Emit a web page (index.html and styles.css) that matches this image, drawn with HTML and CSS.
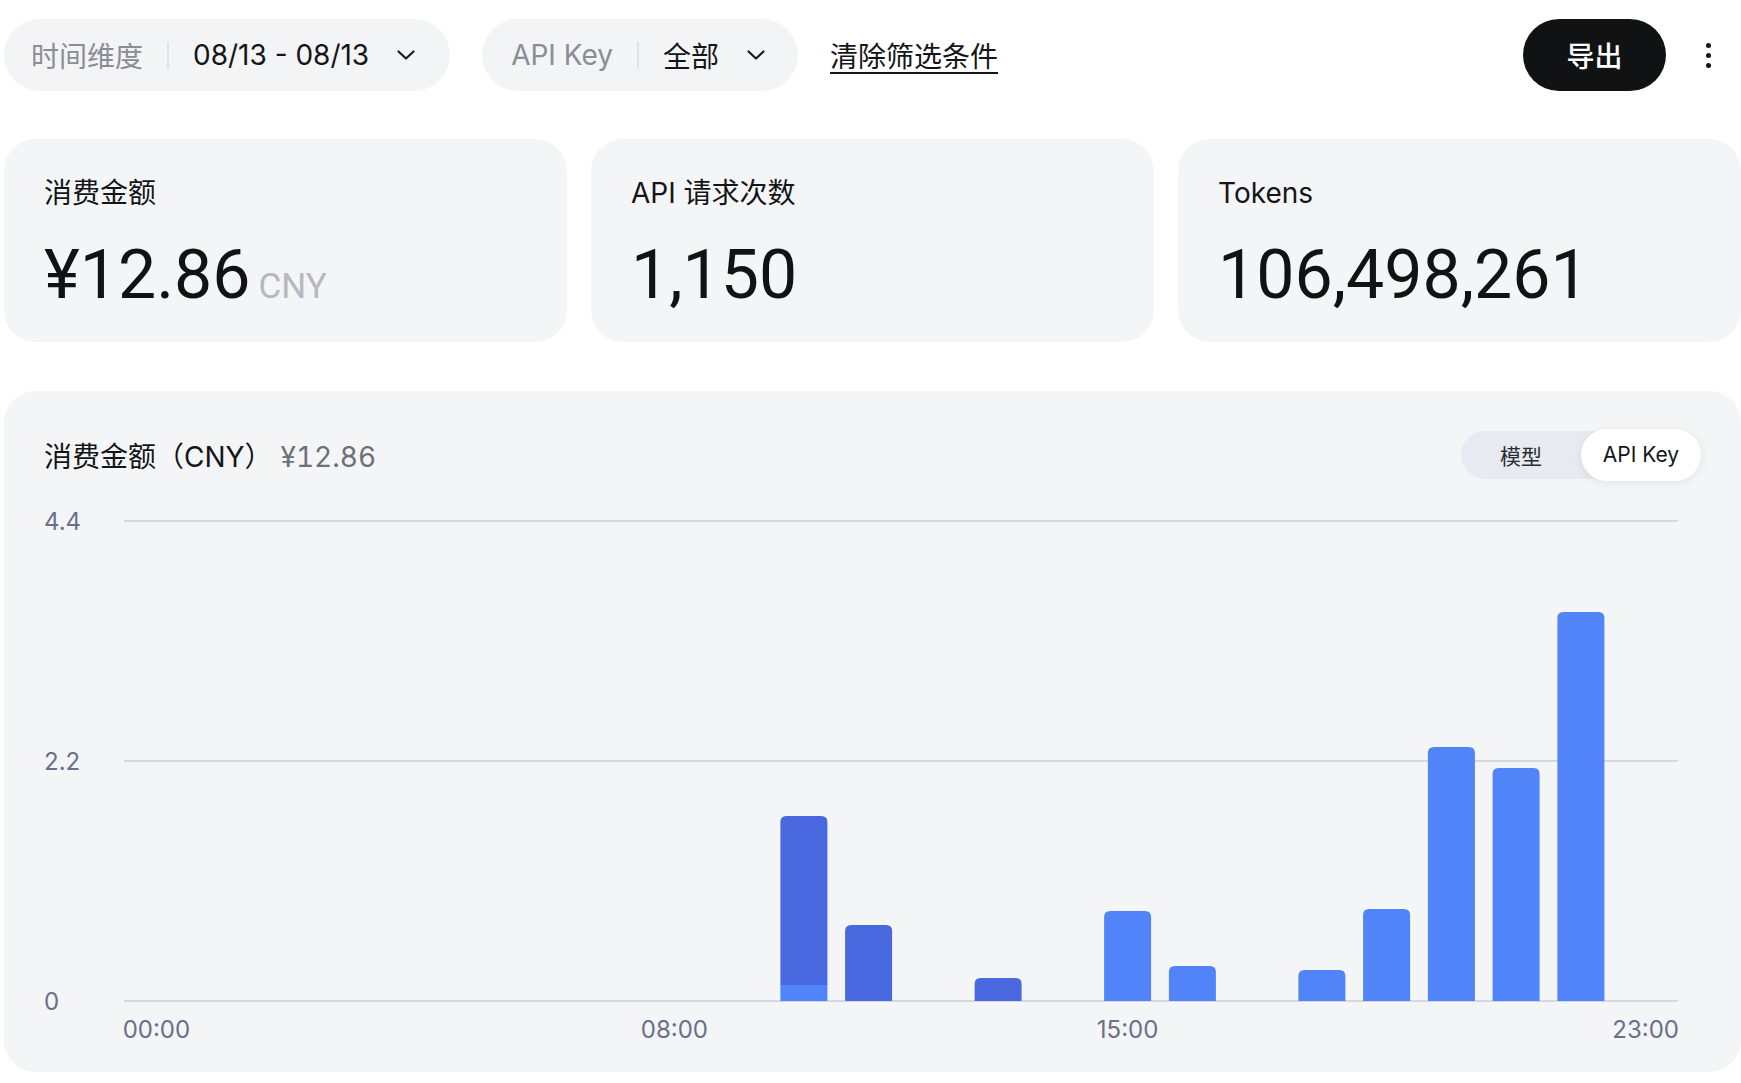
FILE: index.html
```html
<!DOCTYPE html>
<html lang="zh-CN">
<head>
<meta charset="utf-8">
<title>用量</title>
<link rel="stylesheet" href="styles.css">
</head>
<body>
<div class="page">
  <div class="toolbar">
    <div class="pill pill-time">
      <span class="pill-label">时间维度</span>
      <span class="pill-sep"></span>
      <span class="pill-value">08/13 - 08/13</span>
      <svg class="chev" viewBox="0 0 18 10" width="18" height="10"><path d="M1.5 1.5 L9 8.5 L16.5 1.5" fill="none" stroke="#1b1c1f" stroke-width="2.2" stroke-linecap="round" stroke-linejoin="round"/></svg>
    </div>
    <div class="pill pill-key">
      <span class="pill-label">API Key</span>
      <span class="pill-sep"></span>
      <span class="pill-value">全部</span>
      <svg class="chev" viewBox="0 0 18 10" width="18" height="10"><path d="M1.5 1.5 L9 8.5 L16.5 1.5" fill="none" stroke="#1b1c1f" stroke-width="2.2" stroke-linecap="round" stroke-linejoin="round"/></svg>
    </div>
    <a class="clear-link" href="#">清除筛选条件</a>
    <div class="actions">
      <button class="export-btn">导出</button>
      <div class="kebab"><span></span><span></span><span></span></div>
    </div>
  </div>

  <div class="stats">
    <div class="stat-card">
      <div class="stat-label">消费金额</div>
      <div class="stat-value">¥12.86<span class="stat-unit">CNY</span></div>
    </div>
    <div class="stat-card">
      <div class="stat-label">API 请求次数</div>
      <div class="stat-value">1,150</div>
    </div>
    <div class="stat-card">
      <div class="stat-label">Tokens</div>
      <div class="stat-value">106,498,261</div>
    </div>
  </div>

  <div class="chart-card">
    <div class="chart-head">
      <div class="chart-title">消费金额（CNY）<span class="chart-total">¥12.86</span></div>
      <div class="toggle">
        <span class="toggle-item">模型</span>
        <span class="toggle-item active">API Key</span>
      </div>
    </div>
    <svg class="chart" width="1657" height="559" viewBox="0 0 1657 559">
      <g class="grid">
        <line x1="80" y1="30" x2="1634" y2="30"/>
        <line x1="80" y1="270" x2="1634" y2="270"/>
        <line x1="80" y1="510" x2="1634" y2="510"/>
      </g>
      <g class="ylab">
        <text x="0" y="32">4.4</text>
        <text x="0" y="272">2.2</text>
        <text x="0" y="512">0</text>
      </g>
      <g class="bars">
        <rect class="b-light" x="736.4" y="494" width="47" height="16"/>
        <path class="b-dark" d="M736.4 494 V331 Q736.4 325 742.4 325 H777.4 Q783.4 325 783.4 331 V494 Z"/>
        <path class="b-dark" d="M801.1 510 V440 Q801.1 434 807.1 434 H842.1 Q848.1 434 848.1 440 V510 Z"/>
        <path class="b-dark" d="M930.6 510 V493 Q930.6 487 936.6 487 H971.6 Q977.6 487 977.6 493 V510 Z"/>
        <path class="b-light" d="M1060.1 510 V426 Q1060.1 420 1066.1 420 H1101.1 Q1107.1 420 1107.1 426 V510 Z"/>
        <path class="b-light" d="M1124.9 510 V481 Q1124.9 475 1130.9 475 H1165.9 Q1171.9 475 1171.9 481 V510 Z"/>
        <path class="b-light" d="M1254.4 510 V485 Q1254.4 479 1260.4 479 H1295.4 Q1301.4 479 1301.4 485 V510 Z"/>
        <path class="b-light" d="M1319.1 510 V424 Q1319.1 418 1325.1 418 H1360.1 Q1366.1 418 1366.1 424 V510 Z"/>
        <path class="b-light" d="M1383.9 510 V262 Q1383.9 256 1389.9 256 H1424.9 Q1430.9 256 1430.9 262 V510 Z"/>
        <path class="b-light" d="M1448.6 510 V283 Q1448.6 277 1454.6 277 H1489.6 Q1495.6 277 1495.6 283 V510 Z"/>
        <path class="b-light" d="M1513.4 510 V127 Q1513.4 121 1519.4 121 H1554.4 Q1560.4 121 1560.4 127 V510 Z"/>
      </g>
      <g class="xlab">
        <text x="112.4" y="540">00:00</text>
        <text x="630.4" y="540">08:00</text>
        <text x="1083.6" y="540">15:00</text>
        <text x="1601.6" y="540">23:00</text>
      </g>
    </svg>
  </div>
</div>
</body>
</html>
```
FILE: styles.css
```css
* { box-sizing: border-box; }
html, body { margin: 0; padding: 0; background: #ffffff; }
body {
  font-family: "Inter", "Noto Sans CJK SC", sans-serif;
  color: #141518;
}
.page {
  padding: 19px 0 0 4px;
  width: 1741px;
}
.toolbar {
  display: flex;
  align-items: center;
  height: 72px;
}
.pill {
  display: flex;
  align-items: center;
  height: 72px;
  border-radius: 36px;
  background: #f3f4f6;
  font-size: 28px;
}
.pill-time { padding: 0 35px 0 27px; }
.pill-key { padding: 0 33px 0 29px; margin-left: 32px; }
.pill-label { color: #8a8d95; }
.pill-sep {
  width: 2px;
  height: 27px;
  background: #e0e2e6;
  margin: 0 24px;
}
.pill-value { color: #141518; }
.chev { margin-left: 28px; display: block; }
.clear-link {
  margin-left: 32px;
  font-size: 28px;
  color: #141518;
  text-decoration: underline;
  text-underline-offset: 5px;
  text-decoration-thickness: 2px;
}
.actions {
  margin-left: auto;
  display: flex;
  align-items: center;
}
.export-btn {
  width: 143px;
  height: 72px;
  border: none;
  border-radius: 36px;
  background: #111214;
  color: #ffffff;
  font-family: "Inter", "Noto Sans CJK SC", sans-serif;
  font-size: 28px;
  font-weight: 500;
}
.kebab {
  display: flex;
  flex-direction: column;
  align-items: center;
  gap: 5px;
  width: 24px;
  margin: 0 21px 0 30px;
}
.kebab span {
  width: 5px;
  height: 5px;
  border-radius: 50%;
  background: #141518;
}
.stats {
  display: flex;
  gap: 24px;
  margin-top: 48px;
}
.stat-card {
  flex: 1;
  height: 203px;
  background: #f4f5f7;
  border-radius: 32px;
  padding: 34px 40px 0 40px;
}
.stat-label {
  font-size: 28px;
  line-height: 40px;
  color: #141518;
}
.stat-value {
  margin-top: 30px;
  font-family: "Roboto", "Inter", sans-serif;
  font-size: 68px;
  line-height: 64px;
  font-weight: 400;
  color: #111214;
}
.stat-unit {
  font-family: "Roboto", "Inter", sans-serif;
  font-size: 35px;
  font-weight: 400;
  color: #b5b8bf;
  margin-left: 8px;
}
.chart-card {
  margin-top: 49px;
  background: #f4f5f7;
  border-radius: 32px;
  padding: 38px 40px 22px 40px;
}
.chart-head {
  display: flex;
  align-items: center;
  justify-content: space-between;
  height: 52px;
}
.chart-title {
  font-size: 28px;
  color: #141518;
}
.chart-total {
  color: #6d7078;
  margin-left: 8px;
  font-variant-numeric: tabular-nums;
}
.toggle {
  display: flex;
  align-items: center;
  height: 48px;
  background: #e7eaf0;
  border-radius: 24px;
  font-size: 21px;
}
.toggle-item {
  width: 120px;
  text-align: center;
  color: #2a2c31;
}
.toggle-item.active {
  height: 52px;
  line-height: 52px;
  background: #ffffff;
  border-radius: 26px;
  color: #141518;
  box-shadow: 0 2px 8px rgba(30, 40, 70, 0.08);
}
.chart {
  display: block;
  margin-top: 10px;
}
.grid line { stroke: #d3d8e3; stroke-width: 2; }
.ylab text {
  font-family: "Inter", sans-serif;
  font-size: 24px;
  fill: #697089;
  dominant-baseline: middle;
}
.xlab text {
  font-family: "Inter", sans-serif;
  font-size: 24px;
  fill: #697089;
  text-anchor: middle;
  dominant-baseline: middle;
}
.b-dark { fill: #4a69e1; }
.b-light { fill: #5184f9; }
```
